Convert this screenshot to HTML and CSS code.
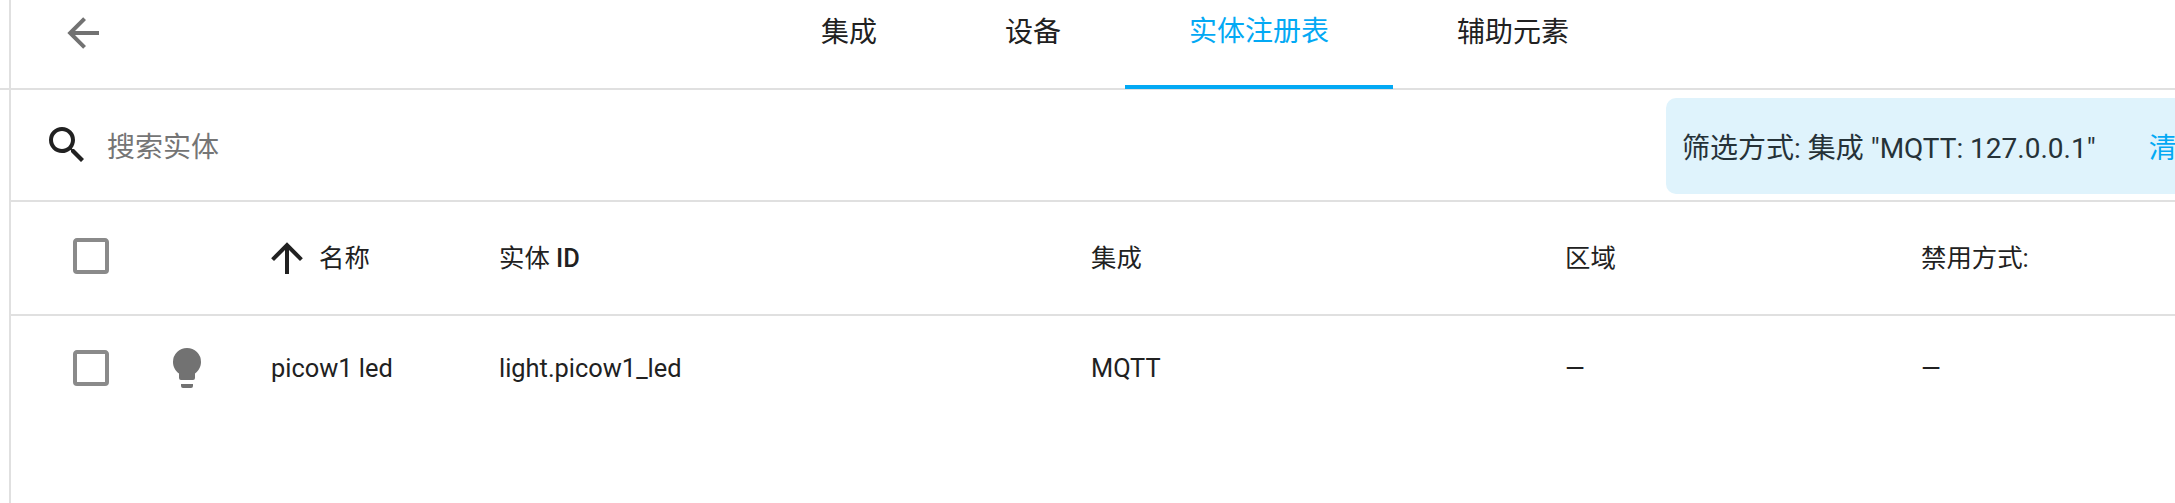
FILE: index.html
```html
<!DOCTYPE html>
<html lang="zh">
<head>
	<meta charset="utf-8">
	<title>实体注册表</title>
	<link rel="stylesheet" href="styles.css">
</head>
<body>
	<div class="sidebar"><div class="sidebar-line"></div></div>

	<div class="main">
		<div class="toolbar">
			<svg class="icon back" viewBox="0 0 24 24"><path d="M20,11V13H8L13.5,18.5L12.08,19.92L4.16,12L12.08,4.08L13.5,5.5L8,11H20Z"/></svg>
			<div class="tabs">
				<div class="tab">集成</div>
				<div class="tab">设备</div>
				<div class="tab active">实体注册表</div>
				<div class="tab">辅助元素</div>
			</div>
		</div>

		<div class="filters">
			<div class="search">
				<svg class="icon search-icon" viewBox="0 0 24 24"><path d="M9.5,3A6.5,6.5 0 0,1 16,9.5C16,11.11 15.41,12.59 14.44,13.73L14.71,14H15.5L20.5,19L19,20.5L14,15.5V14.71L13.73,14.44C12.59,15.41 11.11,16 9.5,16A6.5,6.5 0 0,1 3,9.5A6.5,6.5 0 0,1 9.5,3M9.5,5C7,5 5,7 5,9.5C5,12 7,14 9.5,14C12,14 14,12 14,9.5C14,7 12,5 9.5,5Z"/></svg>
				<span class="placeholder">搜索实体</span>
			</div>
			<div class="active-filter">
				<span>筛选方式: 集成 "MQTT: 127.0.0.1"</span>
				<span class="clear">清除</span>
			</div>
		</div>

		<div class="row head">
			<div class="cell check">
				<svg class="icon box" viewBox="0 0 24 24"><path d="M19,3H5C3.89,3 3,3.89 3,5V19A2,2 0 0,0 5,21H19A2,2 0 0,0 21,19V5C21,3.89 20.1,3 19,3M19,5V19H5V5H19Z"/></svg>
			</div>
			<div class="cell"></div>
			<div class="cell sorted">
				<svg class="icon arrow-up" viewBox="0 0 24 24"><path d="M13,20H11V8L5.5,13.5L4.08,12.08L12,4.16L19.92,12.08L18.5,13.5L13,8V20Z"/></svg>
				<span>名称</span>
			</div>
			<div class="cell">实体 <span class="latin">ID</span></div>
			<div class="cell">集成</div>
			<div class="cell">区域</div>
			<div class="cell">禁用方式:</div>
		</div>

		<div class="row body-row">
			<div class="cell check">
				<svg class="icon box" viewBox="0 0 24 24"><path d="M19,3H5C3.89,3 3,3.89 3,5V19A2,2 0 0,0 5,21H19A2,2 0 0,0 21,19V5C21,3.89 20.1,3 19,3M19,5V19H5V5H19Z"/></svg>
			</div>
			<div class="cell">
				<svg class="icon bulb" viewBox="0 0 24 24"><path d="M12,2A7,7 0 0,0 5,9C5,11.38 6.19,13.47 8,14.74V17A1,1 0 0,0 9,18H15A1,1 0 0,0 16,17V14.74C17.81,13.47 19,11.38 19,9A7,7 0 0,0 12,2M9,21A1,1 0 0,0 10,22H14A1,1 0 0,0 15,21V20H9V21Z"/></svg>
			</div>
			<div class="cell">picow1 led</div>
			<div class="cell">light.picow1_led</div>
			<div class="cell">MQTT</div>
			<div class="cell">—</div>
			<div class="cell">—</div>
		</div>
	</div>
</body>
</html>
```

FILE: styles.css
```css
html, body {
	margin: 0;
	height: 100%;
	overflow: hidden;
}

body {
	display: flex;
	background: #fff;
	color: #212121;
	font-family: Roboto, "Noto Sans CJK SC", sans-serif;
}

.icon {
	display: block;
	flex: none;
	width: 48px;
	height: 48px;
	fill: currentColor;
}

/* Sliver of the sidebar on the left */
.sidebar {
	flex: none;
	width: 9px;
	border-right: 2px solid #e0e0e0;
}

.sidebar-line {
	height: 2px;
	margin-top: 88px;
	background: #e0e0e0;
}

.main {
	flex: 1;
	min-width: 0;
}

/* Top bar */
.toolbar {
	display: flex;
	height: 88px;
	border-bottom: 2px solid #e0e0e0;
}

.back {
	margin: 9px 0 0 48px;
	color: #727272;
}

.tabs {
	display: flex;
	margin-left: 650px;
	height: 89px;
}

.tab {
	padding: 0 64px;
	font-size: 28px;
	line-height: 66px;
	box-sizing: border-box;
}

.tab.active {
	color: #03a9f4;
	line-height: 63px;
	border-bottom: 4px solid #03a9f4;
}

/* Search and filter */
.filters {
	display: flex;
	height: 110px;
	border-bottom: 2px solid #e0e0e0;
}

.search {
	display: flex;
	align-items: center;
	width: 1655px;
	padding-left: 32px;
	box-sizing: border-box;
}

.search-icon {
	margin-right: 16px;
}

.placeholder {
	font-size: 28px;
	color: #757575;
}

.active-filter {
	flex: 1;
	min-width: 0;
	display: flex;
	align-items: center;
	gap: 53px;
	margin: 8px 0 6px;
	padding-left: 16px;
	background: #dff3fc;
	border-radius: 10px 0 0 10px;
	color: #263238;
	font-size: 28px;
	white-space: nowrap;
	overflow: hidden;
}

.clear {
	color: #03a9f4;
}

/* Table */
.row {
	display: grid;
	grid-template-columns: 152px 108px 228px 592px 474px 356px 1fr;
	align-items: center;
	font-size: 25.4px;
}

.head {
	height: 114px;
	box-sizing: border-box;
	padding-bottom: 4px;
	border-bottom: 2px solid #e0e0e0;
}

.latin {
	font-weight: 500;
}

.body-row {
	height: 104px;
}

.check {
	padding-left: 56px;
}

.box {
	color: #8a8a8a;
}

.bulb {
	color: #727272;
}

.sorted {
	display: flex;
	align-items: center;
	gap: 8px;
	margin-left: -8px;
}

.arrow-up {
	margin-top: 4px;
}
```
